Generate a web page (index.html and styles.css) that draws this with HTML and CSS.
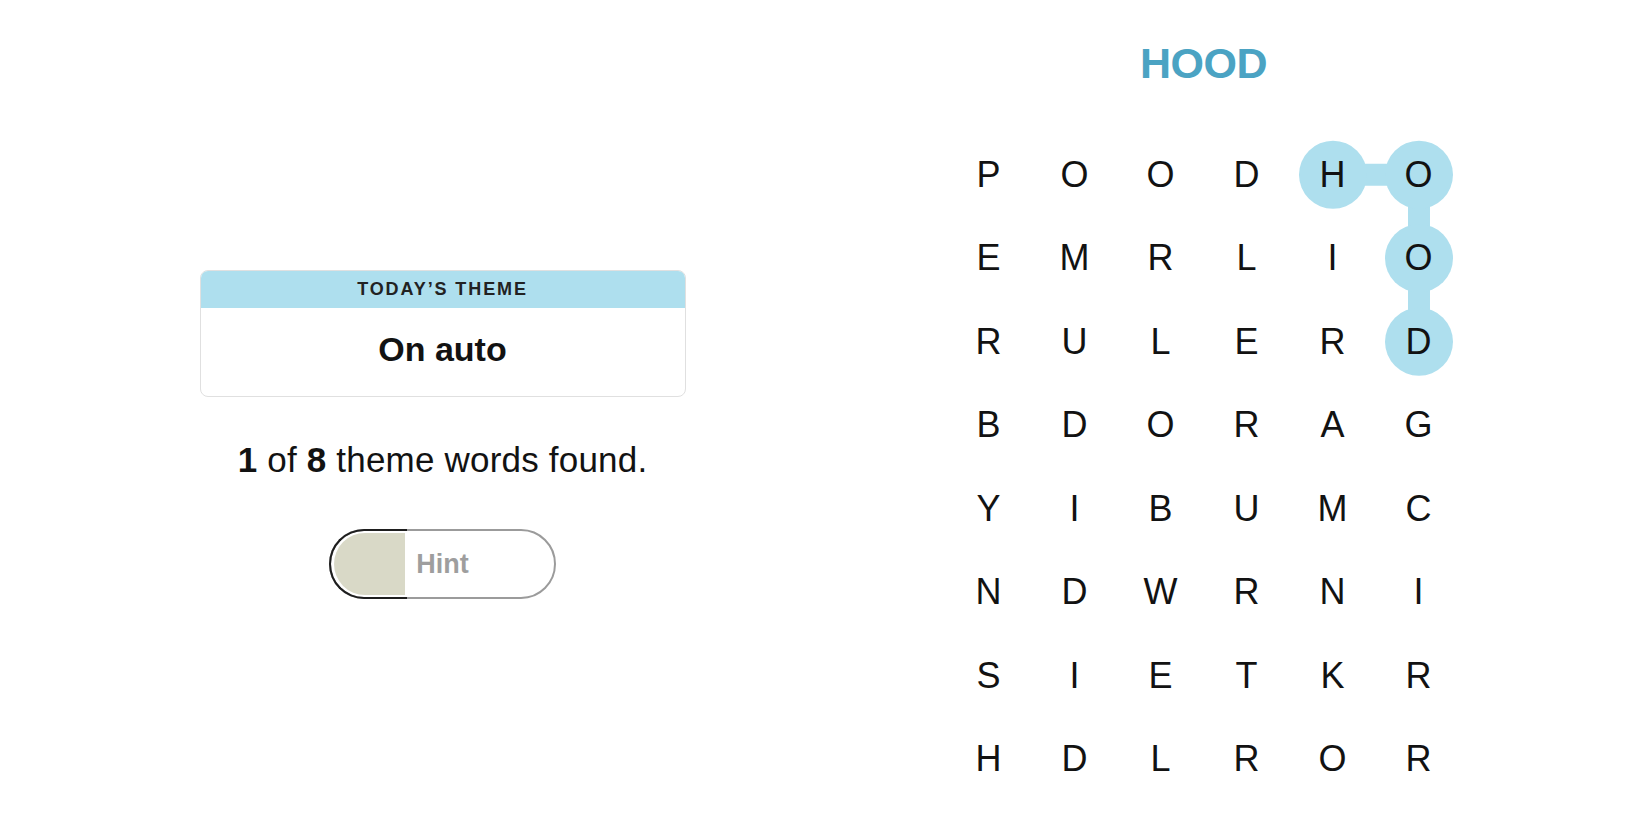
FILE: index.html
```html
<!DOCTYPE html>
<html lang="en">
<head>
<meta charset="utf-8">
<title>Strands</title>
<link rel="stylesheet" href="styles.css">
</head>
<body>
<main class="page">
  <section class="left">
    <div class="theme-card">
      <div class="theme-head">TODAY’S THEME</div>
      <div class="theme-body">On auto</div>
    </div>
    <p class="progress"><b>1</b> of <b>8</b> theme words found.</p>
    <button class="hint"><span class="hint-fill"></span><span class="hint-label">Hint</span></button>
  </section>
  <section class="right">
    <h1 class="word">HOOD</h1>
    <div class="board">
      <svg class="path" width="516" height="668" viewBox="0 0 516 668" aria-hidden="true">
        <g fill="#aedfee" stroke="#aedfee" stroke-width="22">
          <line x1="387" y1="41.75" x2="473" y2="41.75"/>
          <line x1="473" y1="41.75" x2="473" y2="208.75"/>
          <circle cx="387" cy="41.75" r="34" stroke="none"/>
          <circle cx="473" cy="41.75" r="34" stroke="none"/>
          <circle cx="473" cy="125.25" r="34" stroke="none"/>
          <circle cx="473" cy="208.75" r="34" stroke="none"/>
        </g>
      </svg>
      <div class="grid">
        <span>P</span><span>O</span><span>O</span><span>D</span><span>H</span><span>O</span>
        <span>E</span><span>M</span><span>R</span><span>L</span><span>I</span><span>O</span>
        <span>R</span><span>U</span><span>L</span><span>E</span><span>R</span><span>D</span>
        <span>B</span><span>D</span><span>O</span><span>R</span><span>A</span><span>G</span>
        <span>Y</span><span>I</span><span>B</span><span>U</span><span>M</span><span>C</span>
        <span>N</span><span>D</span><span>W</span><span>R</span><span>N</span><span>I</span>
        <span>S</span><span>I</span><span>E</span><span>T</span><span>K</span><span>R</span>
        <span>H</span><span>D</span><span>L</span><span>R</span><span>O</span><span>R</span>
      </div>
    </div>
  </section>
</main>
</body>
</html>
```

FILE: styles.css
```css
html, body {
  margin: 0;
  padding: 0;
  background: #ffffff;
}
body {
  font-family: "Liberation Sans", Arial, sans-serif;
  color: #121212;
  width: 1650px;
  height: 825px;
  overflow: hidden;
}
.page {
  display: flex;
  padding: 0 66px 0 62px;
  height: 825px;
  box-sizing: border-box;
}
.left, .right {
  flex: 1 1 0;
  display: flex;
  flex-direction: column;
  align-items: center;
}
.left {
  padding-top: 270px;
}
.right {
  padding-top: 38px;
}
.theme-card {
  width: 486px;
  border: 1px solid #e0e0e0;
  border-radius: 8px;
  overflow: hidden;
  box-sizing: border-box;
}
.theme-head {
  height: 37px;
  background: #aedfee;
  display: flex;
  align-items: center;
  justify-content: center;
  font-size: 18px;
  font-weight: 700;
  letter-spacing: 1.9px;
  color: #222222;
}
.theme-body {
  height: 88px;
  padding-bottom: 6px;
  box-sizing: border-box;
  display: flex;
  align-items: center;
  justify-content: center;
  font-size: 34px;
  font-weight: 700;
}
.progress {
  margin: 43px 0 0;
  font-size: 35px;
  line-height: 40px;
  letter-spacing: 0.2px;
}
.progress b {
  font-weight: 700;
}
.hint {
  margin-top: 49px;
  position: relative;
  width: 227px;
  height: 70px;
  border: 2px solid #9b9b9b;
  border-radius: 35px;
  background: #ffffff;
  box-sizing: border-box;
  padding: 0;
  display: flex;
  align-items: center;
  justify-content: center;
  font-family: "Liberation Sans", Arial, sans-serif;
}
.hint::before {
  content: "";
  position: absolute;
  left: -2px;
  top: -2px;
  bottom: -2px;
  width: 78px;
  border: 2px solid #1e1e1e;
  border-right: none;
  border-radius: 35px 0 0 35px;
  box-sizing: border-box;
}
.hint-fill {
  position: absolute;
  left: 3px;
  top: 2px;
  bottom: 2px;
  width: 71px;
  background: #d9d9c7;
  border-radius: 32px 0 0 32px;
}
.hint-label {
  position: relative;
  font-size: 27px;
  font-weight: 700;
  color: #9e9e9e;
}
.word {
  margin: 0;
  height: 50px;
  line-height: 50px;
  font-size: 43px;
  font-weight: 700;
  color: #4ba3c3;
  letter-spacing: -0.5px;
}
.board {
  position: relative;
  margin-top: 45px;
  width: 516px;
  height: 668px;
}
.path {
  position: absolute;
  left: 0;
  top: 0;
}
.grid {
  position: relative;
  display: grid;
  grid-template-columns: repeat(6, 86px);
  grid-template-rows: repeat(8, 83.5px);
}
.grid span {
  display: flex;
  align-items: center;
  justify-content: center;
  font-size: 36px;
  color: #121212;
}
```
